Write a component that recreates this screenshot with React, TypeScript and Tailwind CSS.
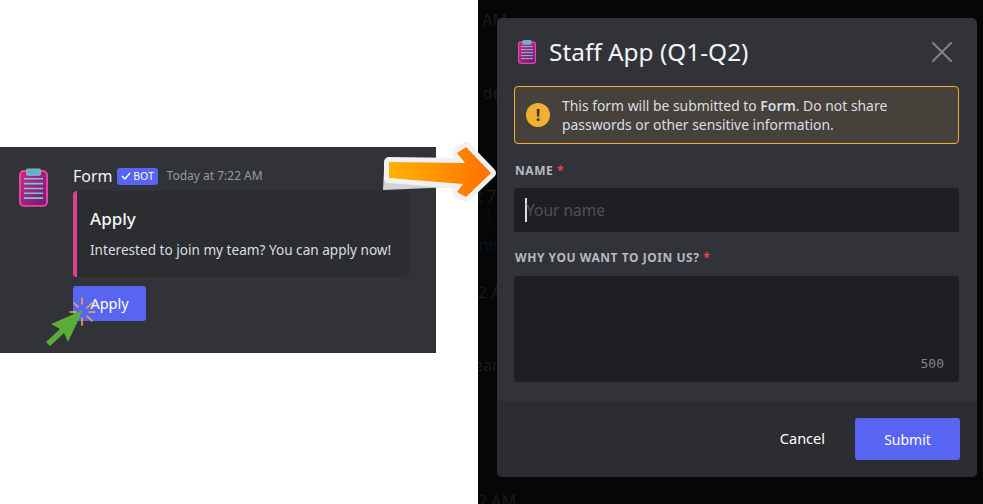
import { X } from 'lucide-react';

function ClipboardIcon({ className = '' }: { className?: string }) {
  return (
    <svg viewBox="0 0 30 40" className={className}>
      <defs>
        <linearGradient id="clip" x1="0" y1="0" x2="1" y2="1">
          <stop offset="0" stopColor="#d0268c" />
          <stop offset="1" stopColor="#6b1a80" />
        </linearGradient>
      </defs>
      <rect x="1" y="3" width="28" height="36" rx="4" fill="url(#clip)" stroke="#e8489a" strokeWidth="2" />
      <rect x="8" y="1" width="14" height="6" rx="1" fill="#52b5dc" stroke="#8fb3b5" strokeWidth="1.5" />
      <path d="M5 11h20M5 16h20M5 21h20M5 26h20M5 31h20" stroke="#6fd0c4" strokeWidth="1.6" />
    </svg>
  );
}

function CursorArrow() {
  return (
    <svg width="60" height="60" viewBox="0 0 60 60" className="absolute left-[40px] top-[293px]">
      <g stroke="#f2a84a" strokeWidth="1.6" strokeLinecap="round">
        <path d="M42 5v6M42 25v7M30 19h6M49 19h6M34 10l4 4M52 10l-5 5M47 23l5 5" />
      </g>
      <path d="M43 17L11 31l9 5L6 49l4 4 14-13 4 9z" fill="#59ac36" />
    </svg>
  );
}

function BigArrow() {
  return (
    <svg width="122" height="70" viewBox="0 0 122 70" className="absolute left-[380px] top-[140px]">
      <defs>
        <linearGradient id="orange" x1="0" y1="0" x2="1" y2="0">
          <stop offset="0" stopColor="#ffb300" />
          <stop offset="1" stopColor="#ff6f00" />
        </linearGradient>
      </defs>
      <path d="M4 30L3 50l70-3v-6z" fill="#d4d4d4" />
      <path
        d="M9 22l76 1-8-10 9-6 25 26-25 24-9-5 6-8-74-6z"
        fill="url(#orange)"
        stroke="#f1f1f1"
        strokeWidth="10"
        strokeLinejoin="round"
        paintOrder="stroke"
      />
    </svg>
  );
}

// app text showing faintly behind the overlay, cut off by the modal
const ghostText = [
  { text: '9 AM', className: 'left-[-9px] top-[12px] text-[#1a1b1c]' },
  { text: 's de', className: 'left-[-7px] top-[85px] text-[#1a1b1c]' },
  { text: 't 7:', className: 'left-[-1px] top-[188px] text-[#1a1b1c]' },
  { text: 'ot o', className: 'left-[-2px] top-[205px] text-[#1d0808]' },
  { text: 'smi', className: 'left-[-7px] top-[237px] text-[#04161f]' },
  { text: '2 AM', className: 'left-[0px] top-[284px] text-[#1a1b1c]' },
  { text: 'ean', className: 'left-[-4px] top-[357px] text-[#1a1b1c]' },
  { text: '2 AM', className: 'left-[0px] top-[493px] text-[#1a1b1c]' },
];

export default function App() {
  return (
    <div className="relative flex h-[504px] w-[983px] overflow-hidden bg-white font-['Noto_Sans',sans-serif]">
      {/* message panel */}
      <div className="w-[478px] shrink-0 pt-[147px]">
        <div className="flex h-[206px] w-[436px] gap-[16px] bg-[#313338] pl-[19px] pt-[20px]">
          <ClipboardIcon className="h-[41px] w-[29px] shrink-0" />
          <div className="-mt-[3px] flex flex-col items-start pl-[9px]">
            <div className="flex h-[24px] items-center">
              <span className="text-[16px] text-[#f2f3f5]">Form</span>
              <span className="ml-[4px] flex h-[17px] w-[41px] items-center gap-[2px] rounded-[3px] bg-[#5865f2] pl-[3px] font-['Liberation_Sans',sans-serif] text-[10px] text-white">
                <svg width="12" height="12" viewBox="0 0 12 12" fill="none" stroke="white" strokeWidth="1.4">
                  <path d="M2 6l3 3 5-6" />
                </svg>
                BOT
              </span>
              <span className="ml-[9px] text-[12px] text-[#949ba4]">Today at 7:22 AM</span>
            </div>
            <div className="mt-[3px] h-[86px] w-[336px] rounded-[4px] border-l-4 border-[#e0418e] bg-[#2b2d31] pl-[13px] pt-[17px]">
              <div className="text-[17px] font-medium leading-[22px] text-[#f2f3f5]">Apply</div>
              <div className="mt-[11px] text-[13.6px] leading-[18px] text-[#dbdee1]">Interested to join my team? You can apply now!</div>
            </div>
            <button className="mt-[9px] h-[35px] w-[73px] rounded-[3px] bg-[#5865f2] text-center text-[14.5px] text-white">Apply</button>
          </div>
        </div>
      </div>

      {/* dimmed app with modal */}
      <div className="relative flex h-[504px] flex-1 flex-col overflow-hidden bg-[#050606] pl-[19px] pt-[18px]">
        {ghostText.map((item) => (
          <span key={item.className} className={`absolute text-[16px] leading-[16px] ${item.className}`}>
            {item.text}
          </span>
        ))}
        <div className="relative flex h-[459px] w-[480px] flex-col overflow-hidden rounded-[5px] bg-[#313338]">
          <div className="flex h-[68px] items-center pl-[21px] pr-[17px]">
            <ClipboardIcon className="h-[24px] w-[18px]" />
            <span className="ml-[13px] text-[24.4px] text-[#f2f3f5]">Staff App (Q1-Q2)</span>
            <X className="ml-auto text-[#7d8087]" size={36} strokeWidth={1.4} />
          </div>
          <div className="flex-1 pl-[17px] pr-[18px]">
            <div className="flex h-[58px] items-center rounded-[4px] border border-[#f0b132] bg-[#46423b] pl-[11px] text-[13.9px] leading-[19px] text-[#dbdee1]">
              <span className="mr-[12px] flex h-[24px] w-[24px] shrink-0 items-center justify-center rounded-full bg-[#f0b132] text-[16px] font-bold text-[#313338]">!</span>
              <p>
                This form will be submitted to <b className="font-semibold">Form</b>. Do not share
                <br />
                passwords or other sensitive information.
              </p>
            </div>
            <label className="mt-[19px] block pl-[1px] text-[12px] font-bold leading-[16px] tracking-[0.55px] text-[#b5bac1]">
              NAME <span className="text-[#f23f42]">*</span>
            </label>
            <div className="mt-[9px] flex h-[44px] items-center rounded-[3px] bg-[#1e1f22] pl-[11px] text-[15.5px] text-[#4e5058]">
              <span className="mr-[-1px] h-[24px] w-[2px] bg-[#dbdee1]" />
              <span className="mt-[2px]">Your name</span>
            </div>
            <label className="mt-[18px] block pl-[1px] text-[12px] font-bold leading-[16px] tracking-[0.55px] text-[#b5bac1]">
              WHY YOU WANT TO JOIN US? <span className="text-[#f23f42]">*</span>
            </label>
            <div className="mt-[10px] flex h-[106px] items-end justify-end rounded-[3px] bg-[#1e1f22] pb-[9px] pr-[15px] font-['DejaVu_Sans_Mono',monospace] text-[13px] text-[#80848e]">
              500
            </div>
          </div>
          <div className="flex h-[76px] items-center justify-end bg-[#2b2d31] pr-[17px]">
            <button className="text-[14.5px] text-white">Cancel</button>
            <button className="ml-[30px] h-[42px] w-[105px] rounded-[3px] bg-[#5865f2] text-[14px] text-white">Submit</button>
          </div>
        </div>
      </div>

      <BigArrow />
      <CursorArrow />
    </div>
  );
}
